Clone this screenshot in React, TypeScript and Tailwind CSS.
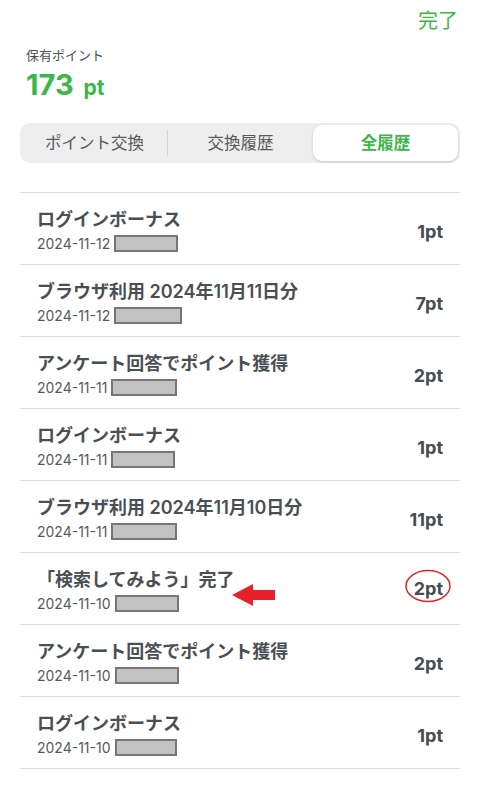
import React from 'react';

const font = { fontFamily: 'Inter, "Noto Sans CJK JP", sans-serif' };

type Row = { title: string; date: string; pt: string; boxW: number; marked?: boolean };

const rows: Row[] = [
  { title: 'ログインボーナス', date: '2024-11-12', pt: '1pt', boxW: 64 },
  { title: 'ブラウザ利用 2024年11月11日分', date: '2024-11-12', pt: '7pt', boxW: 68 },
  { title: 'アンケート回答でポイント獲得', date: '2024-11-11', pt: '2pt', boxW: 66 },
  { title: 'ログインボーナス', date: '2024-11-11', pt: '1pt', boxW: 64 },
  { title: 'ブラウザ利用 2024年11月10日分', date: '2024-11-11', pt: '11pt', boxW: 66 },
  { title: '「検索してみよう」完了', date: '2024-11-10', pt: '2pt', boxW: 64, marked: true },
  { title: 'アンケート回答でポイント獲得', date: '2024-11-10', pt: '2pt', boxW: 64 },
  { title: 'ログインボーナス', date: '2024-11-10', pt: '1pt', boxW: 62 },
];

function HistoryRow({ row }: { row: Row }) {
  return (
    <div className="relative h-[72px] border-b border-[#dcdcdc] flex items-center justify-between pl-[17px] pr-[17px]">
      <div className="flex flex-col pt-[3px]">
        <span className="text-[18px] leading-[24px] font-semibold text-[#4a4f54]">{row.title}</span>
        <div className="flex items-center gap-[4px] mt-[3px]">
          <span className="text-[14px] leading-[17px] text-[#555a5e]">{row.date}</span>
          <span
            className="inline-block h-[17px] bg-[#c2c2c2] border-[2.5px] border-[#767676]"
            style={{ width: row.boxW }}
          />
        </div>
      </div>
      {row.marked && (
        <svg className="absolute left-[212px] top-[31px]" width="44" height="22" viewBox="0 0 44 22">
          <path d="M0 11 L21 0 L21 6 L43 6 L43 16 L21 16 L21 22 Z" fill="#e8202a" />
        </svg>
      )}
      <div className={row.marked ? 'relative' : 'relative pt-[5px]'}>
        <span className="text-[18px] font-bold text-[#464c52]">{row.pt}</span>
        {row.marked && (
          <svg className="absolute -left-[9px] -top-[6px]" width="46" height="34" viewBox="0 0 46 34">
            <ellipse cx="23" cy="17" rx="22" ry="15.5" fill="none" stroke="#e8202a" strokeWidth="1.5" />
          </svg>
        )}
      </div>
    </div>
  );
}

export default function App() {
  return (
    <div className="w-[480px] h-[785px] bg-white overflow-hidden" style={font}>
      {/* header */}
      <div className="flex justify-end pr-[22px] pt-[6px]">
        <span className="text-[20px] text-[#3cb648]">完了</span>
      </div>

      {/* points */}
      <div className="pl-[26px] mt-[10px]">
        <div className="text-[13px] text-[#4a4f54]">保有ポイント</div>
        <div className="flex items-baseline gap-[10px] text-[#3cb648] font-bold -mt-[3px]">
          <span className="text-[29px]">173</span>
          <span className="text-[21px]">pt</span>
        </div>
      </div>

      {/* segmented control */}
      <div className="mx-[20px] mt-[17px] h-[40px] rounded-[10px] bg-[#eeeeee] flex items-center p-[2px]">
        <div className="flex-1 flex items-center justify-center text-[16.5px] text-[#555a5e]">ポイント交換</div>
        <div className="w-px h-[26px] bg-[#d4d4d4]" />
        <div className="flex-1 flex items-center justify-center text-[16.5px] text-[#555a5e]">交換履歴</div>
        <div className="flex-1 h-full rounded-[9px] bg-white shadow-[0_1px_3px_rgba(0,0,0,0.18)] flex items-center justify-center text-[16.5px] font-semibold text-[#3cb648]">
          全履歴
        </div>
      </div>

      {/* history list */}
      <div className="mx-[20px] mt-[29px] border-t border-[#dcdcdc]">
        {rows.map((r, i) => (
          <HistoryRow key={i} row={r} />
        ))}
      </div>
    </div>
  );
}
